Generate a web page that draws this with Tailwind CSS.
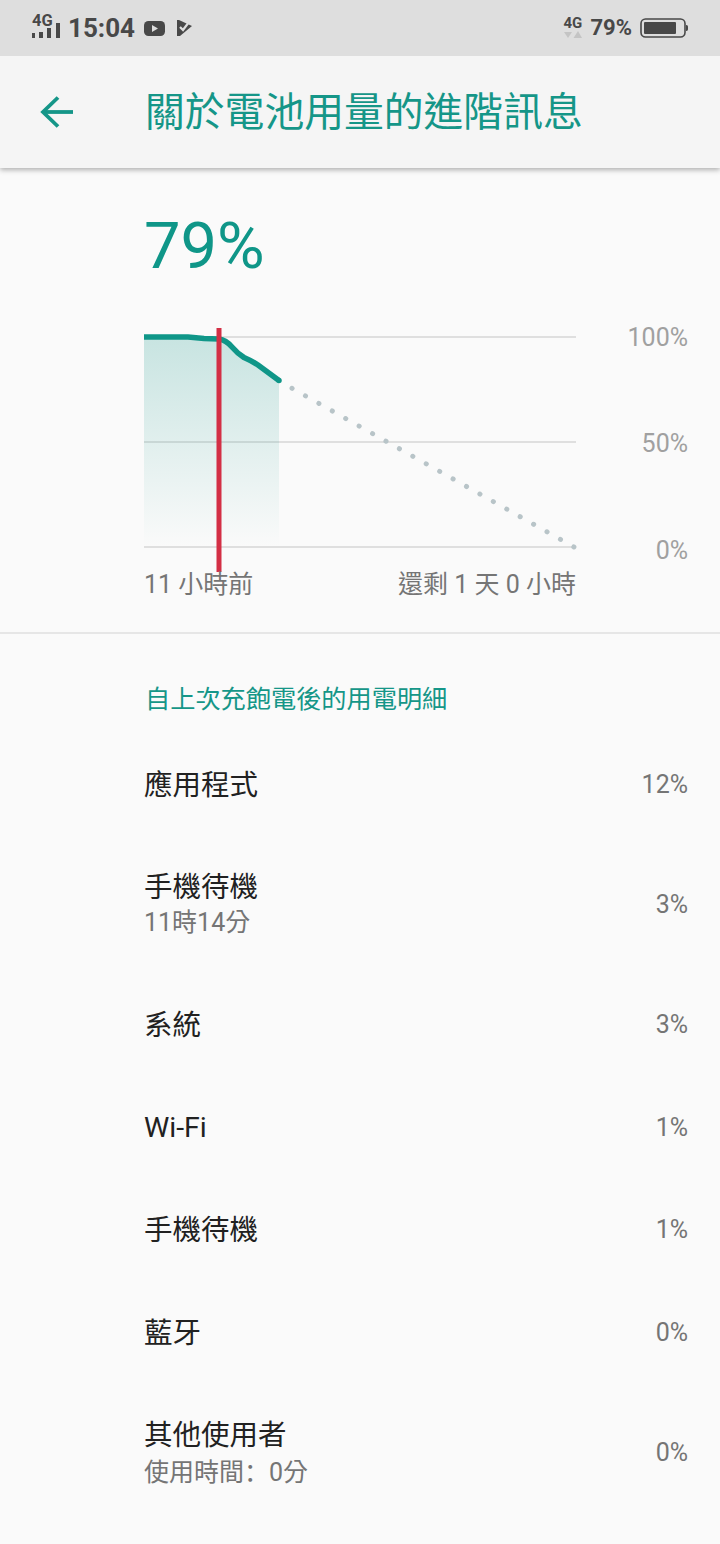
<!DOCTYPE html>
<html lang="zh-Hant">
  <head>
    <meta charset="UTF-8" />
    <title>關於電池用量的進階訊息</title>
    <script src="https://cdn.jsdelivr.net/npm/@tailwindcss/browser@4"></script>
  </head>
  <body class="bg-[#fafafa] font-['Roboto','Noto_Sans_CJK_TC',sans-serif]">
    <div class="w-[720px] h-[1544px] overflow-hidden flex flex-col">
      <!-- status bar -->
      <div class="relative z-10 h-[56px] bg-[#dedede] flex items-center text-[#484848] pl-[32px] pr-[32px] shrink-0">
        <div class="relative w-[28px] h-[26px] mt-[-2px]">
          <span class="absolute left-0 top-[-2px] text-[16.5px] leading-[18px] font-bold">4G</span>
          <svg class="absolute left-0 top-0" width="30" height="28" viewBox="0 0 30 28" fill="#484848">
            <rect x="0" y="19" width="3" height="5" /><rect x="7" y="18" width="4" height="6" /><rect x="15" y="14" width="4" height="10" /><rect x="24" y="9" width="4" height="15" />
          </svg>
        </div>
        <span class="ml-[8px] text-[26px] leading-none font-bold">15:04</span>
        <svg class="ml-[9px]" width="21" height="15" viewBox="0 0 21 15"><rect width="21" height="15" rx="4.5" fill="#484848" /><path d="M8 4 L14 7.5 L8 11 Z" fill="#dedede" /></svg>
        <svg class="ml-[11px]" width="17" height="18" viewBox="0 0 17 18"><path d="M1 1 L3 1 L16 7 L4 17 L1 17 Z" fill="#484848" /><path d="M4 8 L7 11 L13 3" fill="none" stroke="#dedede" stroke-width="2.2" /></svg>
        <div class="ml-auto flex items-center">
          <div class="relative w-[20px] h-[26px]">
            <span class="absolute left-0 top-[-1px] text-[15px] leading-[18px] font-bold">4G</span>
            <svg class="absolute left-[1px] top-[16px]" width="18" height="8" viewBox="0 0 18 8" fill="#c4c4c4"><path d="M0 1 H8 L4 7 Z" /><path d="M14 0 L18 7 H9.5 Z" /></svg>
          </div>
          <span class="ml-[7px] text-[22px] leading-none font-bold">79%</span>
          <svg class="ml-[8px]" width="48" height="20" viewBox="0 0 48 20"><rect x="1" y="1" width="44" height="18" rx="4.5" fill="none" stroke="#484848" stroke-width="1.6" /><rect x="4" y="4" width="32" height="12" rx="1" fill="#484848" /><path d="M46 7 C48 7 48 8 48 10 C48 12 48 13 46 13 Z" fill="#484848" /></svg>
        </div>
      </div>

      <!-- app bar -->
      <div class="relative h-[112px] bg-[#f5f5f5] flex items-center shrink-0 shadow-[0_2px_5px_rgba(0,0,0,0.3)]">
        <svg class="ml-[40px]" width="33" height="32" viewBox="0 0 33 32" fill="none" stroke="#159688" stroke-width="3.8"><path d="M33 16 H3" /><path d="M18 1.5 L3 16 L18 30.5" /></svg>
        <h1 class="ml-[72px] text-[39.8px] leading-none text-[#159688] font-normal whitespace-nowrap mt-[2px]">關於電池用量的進階訊息</h1>
      </div>

      <!-- level -->
      <div class="pl-[144px] pt-[42px] h-[160px] text-[65px] leading-[72px] text-[#0f9688] shrink-0">79%</div>

      <!-- chart -->
      <div class="relative h-[306px] border-b-2 border-[#e6e6e6] shrink-0">
        <svg class="absolute left-0 top-0" width="720" height="303" viewBox="0 328 720 303">
          <defs>
            <linearGradient id="area" x1="0" y1="0" x2="0" y2="1">
              <stop offset="0" stop-color="#159688" stop-opacity="0.22" />
              <stop offset="1" stop-color="#159688" stop-opacity="0" />
            </linearGradient>
          </defs>
          <path d="M144 337 H576 M144 442 H576 M144 547 H576" stroke="#dfdfdf" stroke-width="2" fill="none" />
          <path d="M144 337 H188 L204 338.5 L219 339 Q226 340 232 347 Q238 354 244 357.5 Q252 361 258 365 L279 380.5 V547 H144 Z" fill="url(#area)" />
          <path d="M292 388.3 L574 547" stroke="#b8c4c8" stroke-width="5" stroke-linecap="round" stroke-dasharray="0.1 15.3" fill="none" />
          <path d="M144 337 H188 L204 338.5 L219 339 Q226 340 232 347 Q238 354 244 357.5 Q252 361 258 365 L279 380.5" stroke="#0f9688" stroke-width="5.5" fill="none" />
          <circle cx="279" cy="380.5" r="2.75" fill="#0f9688" />
          <rect x="216.5" y="328" width="5" height="244" fill="#d32f45" />
        </svg>
        <span class="absolute right-[32px] top-[-4px] text-[25px] leading-[28px] text-[#a0a0a0]">100%</span>
        <span class="absolute right-[32px] top-[102px] text-[25px] leading-[28px] text-[#a0a0a0]">50%</span>
        <span class="absolute right-[32px] top-[209px] text-[25px] leading-[28px] text-[#a0a0a0]">0%</span>
        <span class="absolute left-[144px] top-[243px] text-[25px] leading-[28px] text-[#757575]">11 小時前</span>
        <span class="absolute right-[144px] top-[243px] text-[25px] leading-[28px] text-[#757575]">還剩 1 天 0 小時</span>
      </div>

      <!-- breakdown -->
      <div class="pl-[145px] pt-[50px] h-[99px] text-[25.2px] leading-[32px] text-[#159688] shrink-0">自上次充飽電後的用電明細</div>
      <div class="text-[#212121]">
        <div class="h-[103px] pl-[144px] pr-[32px] flex items-center justify-between">
          <span class="text-[28.5px] leading-[36px] pt-[2px]">應用程式</span>
          <span class="text-[25px] text-[#757575]">12%</span>
        </div>
        <div class="h-[137px] pl-[144px] pr-[32px] flex items-center justify-between">
          <div class="flex flex-col">
            <span class="text-[28.5px] leading-[36px]">手機待機</span>
            <span class="text-[25px] leading-[32px] text-[#757575] pt-[1px]">11時14分</span>
          </div>
          <span class="text-[25px] text-[#757575]">3%</span>
        </div>
        <div class="h-[103px] pl-[144px] pr-[32px] flex items-center justify-between">
          <span class="text-[28.5px] leading-[36px] pt-[2px]">系統</span>
          <span class="text-[25px] text-[#757575]">3%</span>
        </div>
        <div class="h-[103px] pl-[144px] pr-[32px] flex items-center justify-between">
          <span class="text-[28.5px] leading-[36px]">Wi-Fi</span>
          <span class="text-[25px] text-[#757575]">1%</span>
        </div>
        <div class="h-[102px] pl-[144px] pr-[32px] flex items-center justify-between">
          <span class="text-[28.5px] leading-[36px] pt-[2px]">手機待機</span>
          <span class="text-[25px] text-[#757575]">1%</span>
        </div>
        <div class="h-[103px] pl-[144px] pr-[32px] flex items-center justify-between">
          <span class="text-[28.5px] leading-[36px] pt-[2px]">藍牙</span>
          <span class="text-[25px] text-[#757575]">0%</span>
        </div>
        <div class="h-[137px] pl-[144px] pr-[32px] flex items-center justify-between">
          <div class="flex flex-col">
            <span class="text-[28.5px] leading-[36px] pt-[2px]">其他使用者</span>
            <span class="text-[25px] leading-[32px] text-[#757575]">使用時間<span lang="zh-CN" class="font-['Noto_Sans_CJK_SC']">：</span>0分</span>
          </div>
          <span class="text-[25px] text-[#757575]">0%</span>
        </div>
      </div>
    </div>
  </body>
</html>
